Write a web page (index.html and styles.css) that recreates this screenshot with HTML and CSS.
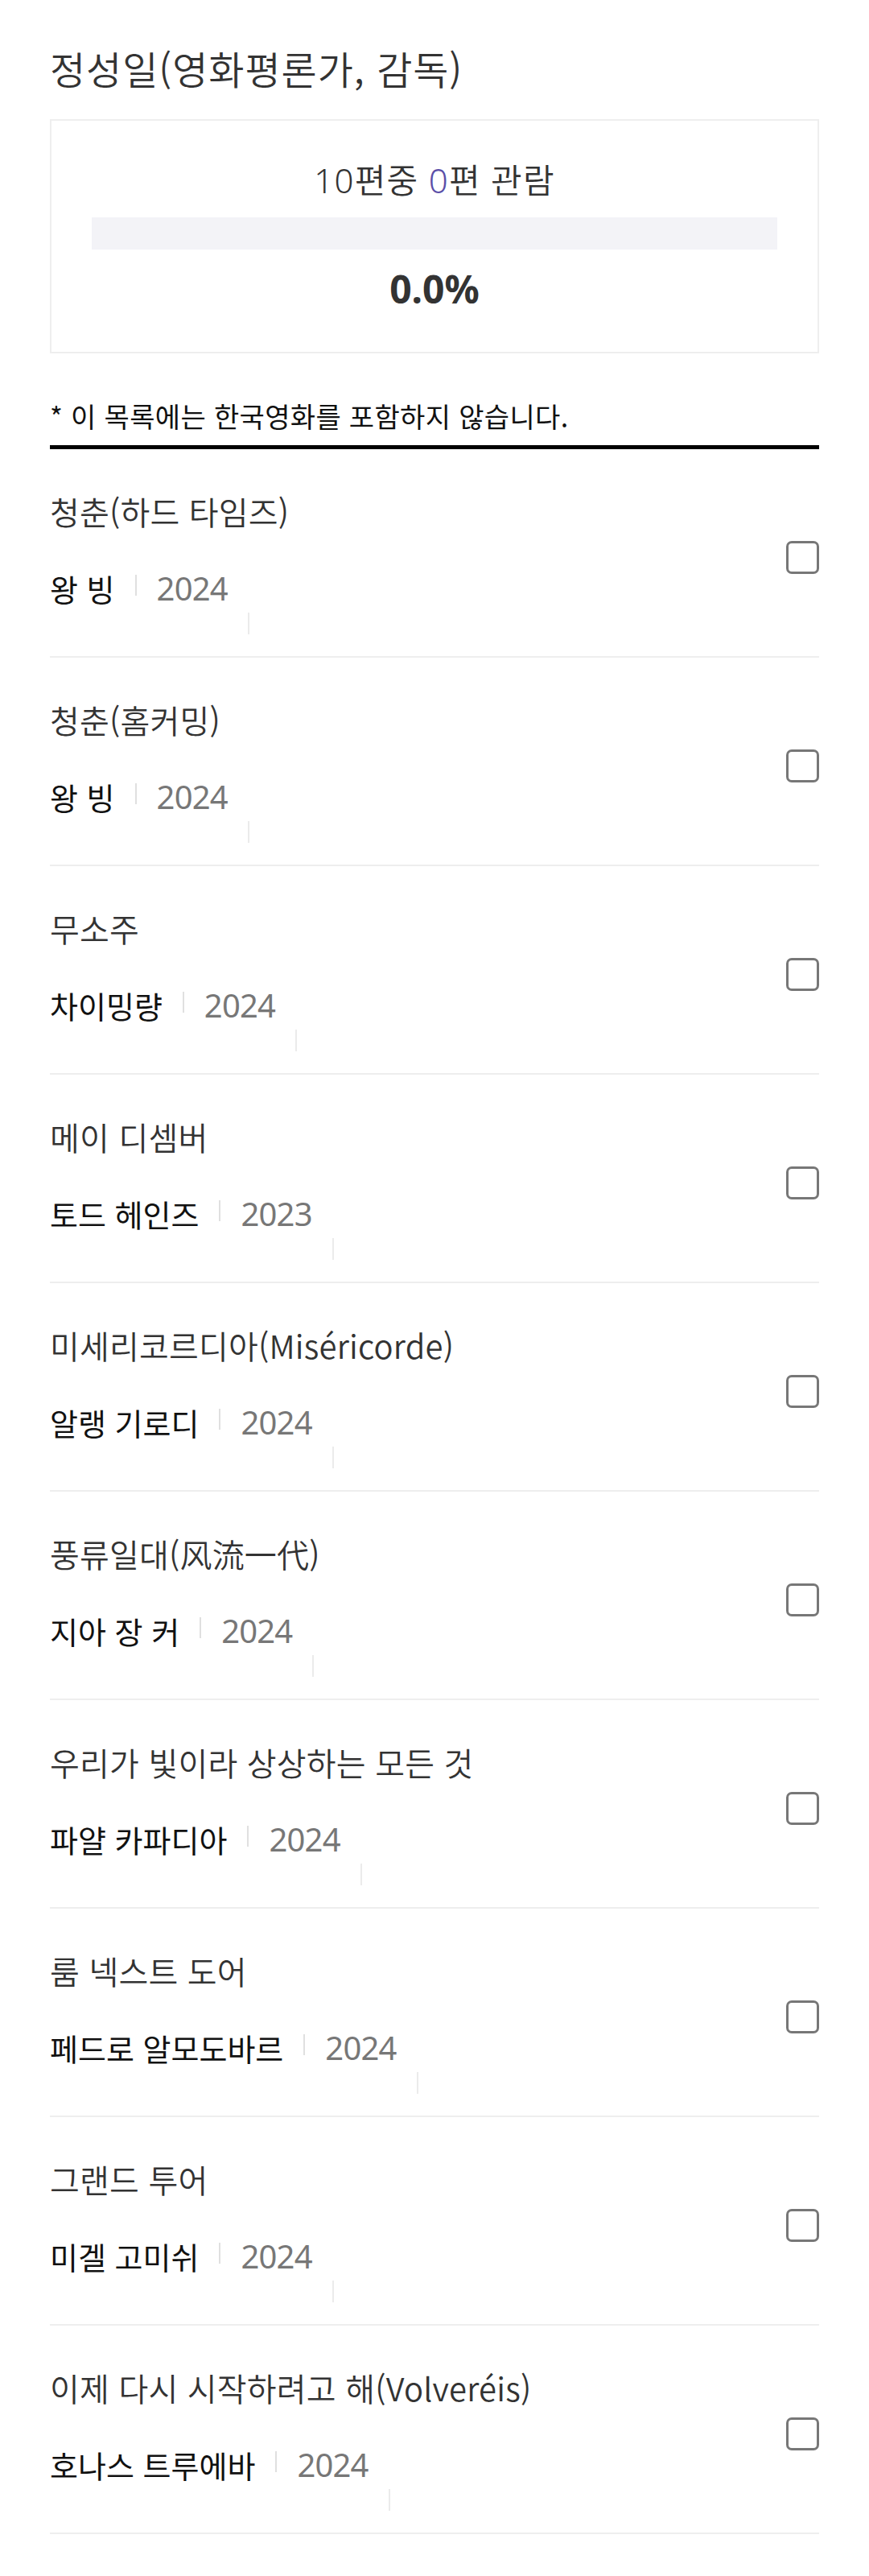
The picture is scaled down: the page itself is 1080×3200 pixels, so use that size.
FILE: index.html
```html
<!DOCTYPE html>
<html lang="ko">
<head>
    <meta charset="UTF-8">
    <meta name="viewport" content="width=device-width, initial-scale=1.0">
    <title>정성일(영화평론가, 감독)</title>
    <link rel="stylesheet" href="styles.css">
</head>
<body>
    <div class="page">
        <h1 class="title">정성일(영화평론가, 감독)</h1>

        <div class="summary">
            <p class="count">10편중 <span class="seen">0</span>편 관람</p>
            <div class="bar">
                <div class="bar-fill" style="width: 0%;"></div>
            </div>
            <p class="percent">0.0%</p>
        </div>

        <p class="note">* 이 목록에는 한국영화를 포함하지 않습니다.</p>

        <ul class="films">
            <li class="film">
                <div class="film-info">
                    <p class="film-title">청춘(하드 타임즈)</p>
                    <div class="meta">
                        <span class="director">왕 빙</span>
                        <span class="sep"></span>
                        <span class="year">2024</span>
                        <span class="sep sep-drop"></span>
                    </div>
                </div>
                <span class="check"></span>
            </li>
            <li class="film">
                <div class="film-info">
                    <p class="film-title">청춘(홈커밍)</p>
                    <div class="meta">
                        <span class="director">왕 빙</span>
                        <span class="sep"></span>
                        <span class="year">2024</span>
                        <span class="sep sep-drop"></span>
                    </div>
                </div>
                <span class="check"></span>
            </li>
            <li class="film">
                <div class="film-info">
                    <p class="film-title">무소주</p>
                    <div class="meta">
                        <span class="director">차이밍량</span>
                        <span class="sep"></span>
                        <span class="year">2024</span>
                        <span class="sep sep-drop"></span>
                    </div>
                </div>
                <span class="check"></span>
            </li>
            <li class="film">
                <div class="film-info">
                    <p class="film-title">메이 디셈버</p>
                    <div class="meta">
                        <span class="director">토드 헤인즈</span>
                        <span class="sep"></span>
                        <span class="year">2023</span>
                        <span class="sep sep-drop"></span>
                    </div>
                </div>
                <span class="check"></span>
            </li>
            <li class="film">
                <div class="film-info">
                    <p class="film-title">미세리코르디아(Miséricorde)</p>
                    <div class="meta">
                        <span class="director">알랭 기로디</span>
                        <span class="sep"></span>
                        <span class="year">2024</span>
                        <span class="sep sep-drop"></span>
                    </div>
                </div>
                <span class="check"></span>
            </li>
            <li class="film">
                <div class="film-info">
                    <p class="film-title">풍류일대(风流一代)</p>
                    <div class="meta">
                        <span class="director">지아 장 커</span>
                        <span class="sep"></span>
                        <span class="year">2024</span>
                        <span class="sep sep-drop"></span>
                    </div>
                </div>
                <span class="check"></span>
            </li>
            <li class="film">
                <div class="film-info">
                    <p class="film-title">우리가 빛이라 상상하는 모든 것</p>
                    <div class="meta">
                        <span class="director">파얄 카파디아</span>
                        <span class="sep"></span>
                        <span class="year">2024</span>
                        <span class="sep sep-drop"></span>
                    </div>
                </div>
                <span class="check"></span>
            </li>
            <li class="film">
                <div class="film-info">
                    <p class="film-title">룸 넥스트 도어</p>
                    <div class="meta">
                        <span class="director">페드로 알모도바르</span>
                        <span class="sep"></span>
                        <span class="year">2024</span>
                        <span class="sep sep-drop"></span>
                    </div>
                </div>
                <span class="check"></span>
            </li>
            <li class="film">
                <div class="film-info">
                    <p class="film-title">그랜드 투어</p>
                    <div class="meta">
                        <span class="director">미겔 고미쉬</span>
                        <span class="sep"></span>
                        <span class="year">2024</span>
                        <span class="sep sep-drop"></span>
                    </div>
                </div>
                <span class="check"></span>
            </li>
            <li class="film">
                <div class="film-info">
                    <p class="film-title">이제 다시 시작하려고 해(Volveréis)</p>
                    <div class="meta">
                        <span class="director">호나스 트루에바</span>
                        <span class="sep"></span>
                        <span class="year">2024</span>
                        <span class="sep sep-drop"></span>
                    </div>
                </div>
                <span class="check"></span>
            </li>
        </ul>
    </div>
</body>
</html>
```

FILE: styles.css
```css
body {
    margin: 0;
    background: #fff;
    color: #333;
    font-family: "Noto Sans CJK KR", "Noto Sans CJK SC", "Noto Sans", sans-serif;
}

p {
    margin: 0;
}

.page {
    padding: 0 62px 40px;
}

.title {
    margin: 0;
    padding-top: 52px;
    font-size: 48px;
    font-weight: 350;
    line-height: 64px;
    letter-spacing: 0.02em;
    color: #333;
}

.summary {
    margin-top: 32px;
    border: 2px solid #eee;
    padding: 46px 50px;
    text-align: center;
}

.count {
    font-family: "Noto Sans", "Noto Sans CJK KR", sans-serif;
    font-size: 42px;
    font-weight: 350;
    line-height: 56px;
    letter-spacing: 0.03em;
    color: #333;
}

.seen {
    color: #5b4fa8;
}

.bar {
    margin-top: 18px;
    height: 40px;
    background: #f3f3f7;
}

.bar-fill {
    height: 100%;
    background: #5b4fa8;
}

.percent {
    margin-top: 17px;
    font-family: "Noto Sans", sans-serif;
    font-size: 48px;
    font-weight: 700;
    line-height: 64px;
    color: #333;
}

.note {
    margin-top: 54px;
    padding-bottom: 12px;
    border-bottom: 5px solid #000;
    font-size: 34px;
    line-height: 48px;
    letter-spacing: 0.01em;
    color: #111;
}

.films {
    list-style: none;
    margin: 0;
    padding: 0;
}

.film {
    display: flex;
    align-items: flex-start;
    justify-content: space-between;
    padding: 49px 0 27px;
    border-bottom: 2px solid #eee;
}

.film-info {
    flex: 1;
}

.film-title {
    font-size: 40px;
    font-weight: 350;
    line-height: 56px;
    letter-spacing: 0.005em;
    color: #333;
}

.meta {
    display: flex;
    align-items: flex-start;
    margin-top: 44px;
}

.director {
    font-size: 38px;
    line-height: 48px;
    color: #111;
}

.year {
    font-family: "Noto Sans", sans-serif;
    font-size: 40px;
    line-height: 48px;
    letter-spacing: -0.02em;
    color: #777;
}

.sep {
    width: 2px;
    height: 26px;
    margin: 7px 25px 0;
    background: #e0e0e0;
}

.sep-drop {
    height: 27px;
    margin-top: 54px;
    background: #ebebeb;
}

.check {
    width: 41px;
    height: 41px;
    box-sizing: border-box;
    margin-top: 65px;
    border: 3px solid #777;
    border-radius: 7px;
}
```
